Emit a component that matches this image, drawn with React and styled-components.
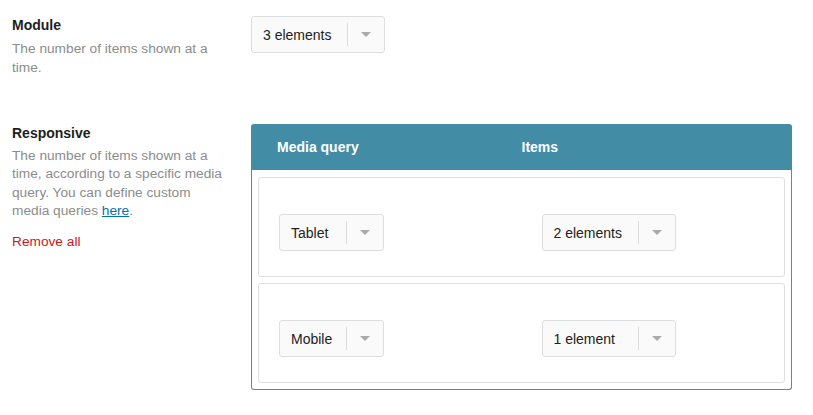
import React from "react";
import styled, { createGlobalStyle } from "styled-components";

const GlobalStyle = createGlobalStyle`
  body {
    margin: 0;
    background: #fff;
    font-family: "Liberation Sans", Arial, sans-serif;
    color: #1e1e1e;
  }
`;

const Page = styled.div`
  padding: 16px 21px 0 12px;
`;

const Section = styled.section`
  display: grid;
  grid-template-columns: 239px 1fr;
  margin-bottom: ${({ $gap }) => $gap || 0}px;
`;

const Info = styled.div`
  display: flex;
  flex-direction: column;
  align-items: flex-start;
`;

const Title = styled.h3`
  margin: 0 0 5px;
  font-size: 14px;
  font-weight: 700;
  line-height: 18px;
  color: #1e1e1e;
`;

const Desc = styled.p`
  margin: 0;
  max-width: 218px;
  font-size: 13.7px;
  line-height: ${({ $lh }) => $lh || 18.3}px;
  color: #8c8c8c;

  a {
    color: #0073aa;
    text-decoration: underline;
  }
`;

const RemoveLink = styled.a`
  margin-top: 13px;
  font-size: 13.7px;
  line-height: 18px;
  color: #cc1818;
  cursor: pointer;
`;

const SelectBox = styled.div`
  display: inline-flex;
  align-items: center;
  box-sizing: border-box;
  width: ${({ $w }) => $w}px;
  height: 37px;
  background: #fafafa;
  border: 1px solid #dddddd;
  border-radius: 3px;
  font-size: 14px;
  color: #222;
  cursor: pointer;
`;

const SelectValue = styled.span`
  flex: 1;
  padding-left: 11px;
  white-space: nowrap;
`;

const Divider = styled.span`
  width: 1px;
  height: 23px;
  background: #dcdcdc;
`;

const ArrowZone = styled.span`
  display: flex;
  align-items: center;
  justify-content: center;
  width: 36px;
  height: 100%;

  &::after {
    content: "";
    border-left: 5.5px solid transparent;
    border-right: 5.5px solid transparent;
    border-top: 5.5px solid #aaaaaa;
  }
`;

const Table = styled.div`
  display: flex;
  flex-direction: column;
`;

const TableHead = styled.div`
  display: grid;
  grid-template-columns: 1fr 1fr;
  align-items: center;
  height: 46px;
  padding: 0 26px;
  background: #428ca6;
  border-radius: 3px 3px 0 0;
  color: #fff;
  font-size: 14px;
  font-weight: 700;
`;

const TableBody = styled.div`
  display: flex;
  flex-direction: column;
  gap: 6px;
  padding: 7px 6px 6px;
  border: 1px solid #75818b;
  border-top: none;
  border-radius: 0 0 3px 3px;
`;

const RowCard = styled.div`
  display: grid;
  grid-template-columns: 1fr 1fr;
  padding: 36px 0 25px;
  background: #fff;
  border: 1px solid #e0e0e0;
  border-radius: 3px;
`;

const Cell = styled.div`
  padding: 0 20px;
`;

const Select = ({ value, width }) => (
  <SelectBox $w={width}>
    <SelectValue>{value}</SelectValue>
    <Divider />
    <ArrowZone />
  </SelectBox>
);

const rows = [
  { query: "Tablet", items: "2 elements" },
  { query: "Mobile", items: "1 element" },
];

export default function App() {
  return (
    <>
      <GlobalStyle />
      <Page>
        <Section $gap={47}>
          <Info>
            <Title>Module</Title>
            <Desc $lh={19}>The number of items shown at a time.</Desc>
          </Info>
          <div>
            <Select value="3 elements" width={134} />
          </div>
        </Section>

        <Section>
          <Info>
            <Title>Responsive</Title>
            <Desc>
              The number of items shown at a time, according to a specific
              media query. You can define custom media queries{" "}
              <a href="#">here</a>.
            </Desc>
            <RemoveLink>Remove all</RemoveLink>
          </Info>
          <Table>
            <TableHead>
              <span>Media query</span>
              <span>Items</span>
            </TableHead>
            <TableBody>
              {rows.map((r) => (
                <RowCard key={r.query}>
                  <Cell>
                    <Select value={r.query} width={105} />
                  </Cell>
                  <Cell>
                    <Select value={r.items} width={134} />
                  </Cell>
                </RowCard>
              ))}
            </TableBody>
          </Table>
        </Section>
      </Page>
    </>
  );
}
